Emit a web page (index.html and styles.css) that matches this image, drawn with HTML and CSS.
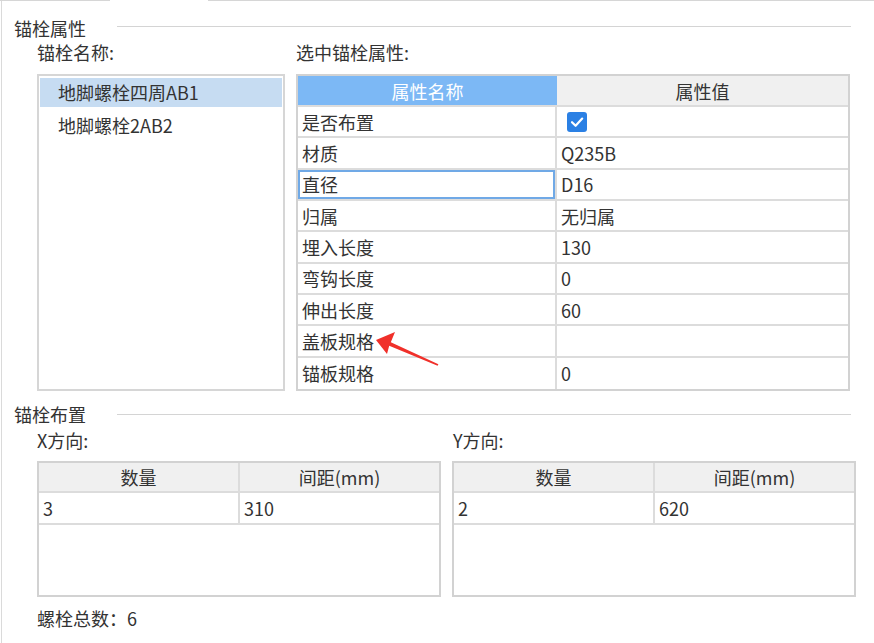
FILE: index.html
```html
<!DOCTYPE html>
<html lang="zh-CN">
<head>
<meta charset="utf-8">
<title>锚栓属性</title>
<link rel="stylesheet" href="styles.css">
</head>
<body>
<div class="tabs"><span class="tab-a"></span><span class="tab-gap"></span><span class="tab-b"></span></div>
<div class="panel">
  <div class="grp-head grp-top"><span class="grp-title">锚栓属性</span><i class="rule"></i></div>
  <div class="top-row">
    <div class="col-left">
      <div class="lbl">锚栓名称:</div>
      <div class="listbox">
        <div class="item sel">地脚螺栓四周AB1</div>
        <div class="item">地脚螺栓2AB2</div>
      </div>
    </div>
    <div class="col-right">
      <div class="lbl">选中锚栓属性:</div>
      <div class="ptable">
        <div class="th th-active">属性名称</div><div class="th">属性值</div>
        <div class="td c1">是否布置</div><div class="td"><span class="chk"><svg viewBox="0 0 20 20" width="20" height="20"><path d="M5 10.2 L8.6 13.8 L15.2 6.6" fill="none" stroke="#fff" stroke-width="2.2" stroke-linecap="round" stroke-linejoin="round"/></svg></span></div>
        <div class="td c1">材质</div><div class="td">Q235B</div>
        <div class="td c1 focus">直径</div><div class="td">D16</div>
        <div class="td c1">归属</div><div class="td">无归属</div>
        <div class="td c1">埋入长度</div><div class="td">130</div>
        <div class="td c1">弯钩长度</div><div class="td">0</div>
        <div class="td c1">伸出长度</div><div class="td">60</div>
        <div class="td c1">盖板规格</div><div class="td"></div>
        <div class="td c1 last">锚板规格</div><div class="td last">0</div>
      </div>
    </div>
  </div>
  <div class="grp-head grp-bottom"><span class="grp-title">锚栓布置</span><i class="rule"></i></div>
  <div class="bottom-row">
    <div class="dir-col">
      <div class="lbl">X方向:</div>
      <div class="dgrid">
        <div class="dh c1">数量</div><div class="dh">间距(mm)</div>
        <div class="dd c1">3</div><div class="dd">310</div>
      </div>
    </div>
    <div class="dir-col">
      <div class="lbl lbl-y">Y方向:</div>
      <div class="dgrid">
        <div class="dh c1">数量</div><div class="dh">间距(mm)</div>
        <div class="dd c1">2</div><div class="dd">620</div>
      </div>
    </div>
  </div>
  <div class="total">螺栓总数：6</div>
</div>
<svg class="arrow" width="874" height="643" viewBox="0 0 874 643">
  <polygon points="376,340 395,332 390.8,342.2 438.4,364.2 437.6,365.8 389.2,345.8 387,354" fill="#f0302a"/>
</svg>
</body>
</html>
```
FILE: styles.css
```css
* { box-sizing: border-box; }
html, body { margin: 0; padding: 0; background: #fff; }
body {
  width: 874px;
  height: 643px;
  position: relative;
  overflow: hidden;
  font-family: "Noto Sans CJK SC", "Noto Sans", sans-serif;
  font-size: 18px;
  color: #333;
}
.tabs { display: flex; height: 1px; }
.tab-a { width: 110px; background: #d6d6d6; }
.tab-gap { width: 98px; }
.tab-b { flex: 1; background: #d6d6d6; }

.panel {
  margin-left: 1px;
  border-left: 1px solid #dadada;
  height: 642px;
  padding: 15px 0 0 12px;
}
.grp-head {
  display: flex;
  height: 24px;
  line-height: 24px;
  margin-right: 23px;
}
.grp-title { white-space: nowrap; }
.rule {
  flex: 1;
  height: 1px;
  background: #d4d4d4;
  margin-left: 31px;
}
.grp-top .rule { margin-top: 10px; }
.grp-bottom { margin-top: 11px; }
.grp-bottom .rule { margin-top: 12px; }

.lbl { height: 24px; line-height: 24px; white-space: nowrap; }

.top-row {
  display: flex;
  gap: 11px;
  margin-left: 23px;
}
.col-left { width: 248px; }
.col-right { width: 554px; }
.listbox, .ptable { margin-top: 10px; height: 317px; }
.listbox {
  border: 2px solid #d6d6d6;
  padding: 2px 1px;
}
.item {
  height: 29px;
  line-height: 29px;
  padding-left: 18px;
  margin-bottom: 4px;
}
.item.sel { background: #c6dcf2; }

.ptable {
  border: 2px solid #d2d2d2;
  display: grid;
  grid-template-columns: 259px 1fr;
  grid-template-rows: 31px repeat(9, 1fr);
}
.th, .td {
  display: flex;
  align-items: center;
  border-bottom: 2px solid #dcdcdc;
  white-space: nowrap;
}
.th { justify-content: center; background: #f0f0f0; }
.th-active { background: #7cb8f5; color: #fff; }
.td { padding-left: 4px; }
.c1 { border-right: 2px solid #dcdcdc; }
.td.last { border-bottom: none; }
.focus { box-shadow: inset 0 0 0 2px #70a9e6; }
.chk {
  width: 20px;
  height: 20px;
  margin-left: 6px;
  border-radius: 3px;
  background: #2b80e4;
  display: flex;
}

.bottom-row {
  display: flex;
  gap: 11px;
  margin-left: 23px;
  margin-top: 2px;
}
.dir-col { width: 404px; }
.lbl-y { padding-left: 1px; }
.dgrid {
  margin-top: 9px;
  height: 136px;
  border: 2px solid #d2d2d2;
  display: grid;
  grid-template-columns: 201px 1fr;
  grid-template-rows: 30px 32px;
  align-content: start;
}
.dh, .dd {
  display: flex;
  align-items: center;
  border-bottom: 2px solid #dcdcdc;
}
.dh { justify-content: center; background: #f0f0f0; }
.dd { padding-left: 4px; }

.total {
  margin: 9px 0 0 23px;
  height: 24px;
  line-height: 24px;
}
.arrow { position: absolute; left: 0; top: 0; pointer-events: none; }
```
